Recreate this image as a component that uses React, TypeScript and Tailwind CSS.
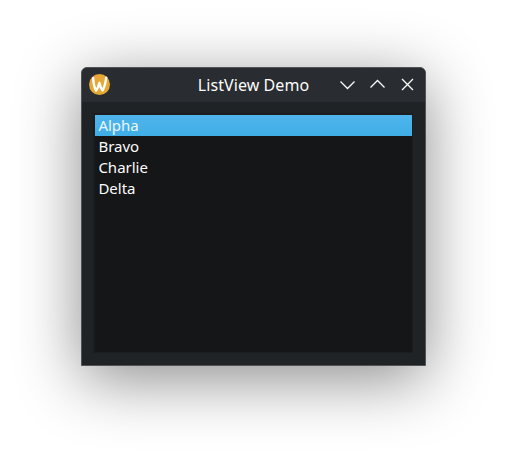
const items = ["Alpha", "Bravo", "Charlie", "Delta"];

function WaylandLogo() {
  return (
    <svg width="22" height="22" viewBox="0 0 22 22" fill="none">
      <defs>
        <linearGradient id="disc" x1="0" y1="0" x2="1" y2="1">
          <stop offset="0" stopColor="#e9a43e" />
          <stop offset="1" stopColor="#e3ab2e" />
        </linearGradient>
      </defs>
      <circle cx="10.5" cy="10.5" r="10.5" fill="url(#disc)" />
      <path
        d="M4.2 4.2 C4.4 9 5.200 13.200 7 16.600 C8.600 14.600 9.700 11.800 10.400 8.800 C10.900 11.800 12 14.600 13.600 16.400 C15.500 13 16.600 8.600 17.200 3.600"
        stroke="#fff"
        strokeWidth="2.4"
        strokeLinecap="round"
        strokeLinejoin="round"
      />
    </svg>
  );
}

export default function App() {
  return (
    <div className="h-[462px] w-[508px] overflow-hidden bg-white pl-[81px] pt-[67px] font-['Noto_Sans',sans-serif]">
      <div className="flex h-[299px] w-[345px] flex-col overflow-hidden rounded-t-[6px] border border-[#4f5355] bg-[#202326] shadow-[0_13px_64px_rgba(0,0,0,0.46)]">
        <header className="grid h-[34px] shrink-0 grid-cols-[1fr_auto_1fr] items-center bg-[#292c30] pl-[7px] pr-[7px]">
          <WaylandLogo />
          <h1 className="text-[16px] leading-[22px] tracking-[0.08px] text-[#fcfcfc]">ListView Demo</h1>
          <div className="flex justify-end gap-[8px]">
            <svg width="22" height="22" viewBox="0 0 22 22" fill="none" stroke="#fcfcfc" strokeWidth="1.3">
              <path d="M4.500 7.500 L11.500 14.500 L18.500 7.500" />
            </svg>
            <svg width="22" height="22" viewBox="0 0 22 22" fill="none" stroke="#fcfcfc" strokeWidth="1.3">
              <path d="M4.500 13.500 L11.500 6.500 L18.500 13.500" />
            </svg>
            <svg width="22" height="22" viewBox="0 0 22 22" fill="none" stroke="#fcfcfc" strokeWidth="1.3">
              <path d="M6 5 L17 16 M17 5 L6 16" />
            </svg>
          </div>
        </header>
        <main className="flex-1 px-[11px] pb-[12px] pt-[11px]">
          <ul className="mr-[1px] h-full border-b border-l-2 border-r border-t-2 border-[#1b1d1f] bg-[#151618]">
            {items.map((item, i) => (
              <li
                key={item}
                className={
                  "h-[21px] pl-[3.4px] text-[15px] leading-[21px] " +
                  (i === 0
                    ? "bg-linear-to-b from-[#4fb5ec] to-[#40ade6] text-[#eaf6fd]"
                    : "text-[#fcfcfc]")
                }
              >
                {item}
              </li>
            ))}
          </ul>
        </main>
      </div>
    </div>
  );
}
